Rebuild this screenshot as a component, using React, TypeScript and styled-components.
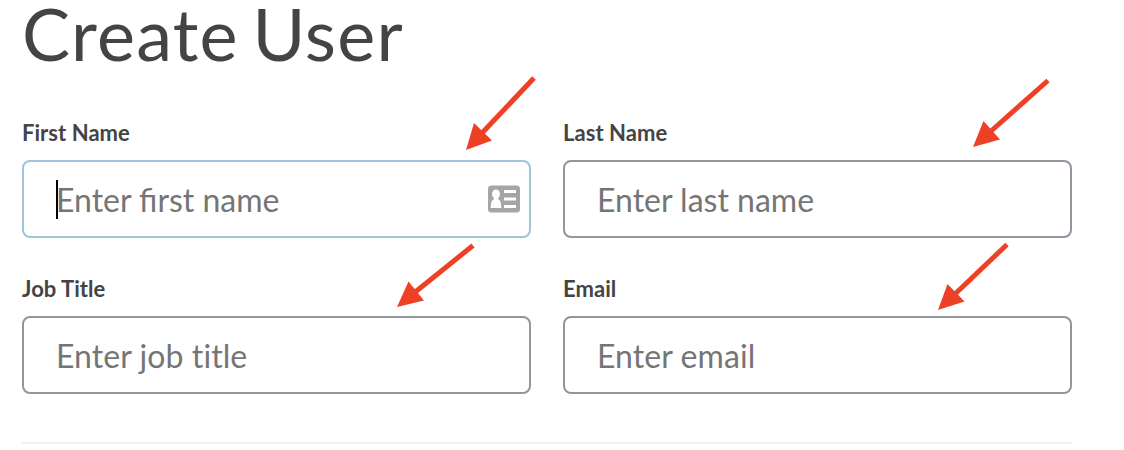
import styled, {createGlobalStyle} from 'styled-components'

const GlobalStyle = createGlobalStyle`
    * {
        box-sizing: border-box;
    }

    body {
        margin: 0;
        background: #fff;
        font-family: Lato, 'Liberation Sans', sans-serif;
        color: #444;
    }
`

const ContactIcon = () => (
    <svg width="32" height="28" viewBox="0 0 32 28">
        <rect y="0.5" width="32" height="27" rx="3.5" fill="#a5a5a5"/>
        <ellipse cx="8" cy="9" rx="4" ry="4.5" fill="#fff"/>
        <path d="M6 12h4v2c2.5 1 3.3 4 3.3 9H2.7c0-5 .8-8 3.3-9z" fill="#fff"/>
        <path d="M16 6.5h12M16 14h12M16 21.5h12" stroke="#fff" strokeWidth="3"/>
    </svg>
)

const App = () => (
    <>
        <GlobalStyle/>
        <Page>
            <Title>Create User</Title>
            <Fields>
                <Field>
                    <Label>First Name</Label>
                    <InputBox $focused>
                        <Caret/>
                        <Placeholder>Enter first name</Placeholder>
                        <ContactIcon/>
                    </InputBox>
                </Field>
                <Field>
                    <Label>Last Name</Label>
                    <InputBox><Placeholder>Enter last name</Placeholder></InputBox>
                </Field>
                <Field>
                    <Label>Job Title</Label>
                    <InputBox><Placeholder $plain>Enter job title</Placeholder></InputBox>
                </Field>
                <Field>
                    <Label>Email</Label>
                    <InputBox><Placeholder $plain>Enter email</Placeholder></InputBox>
                </Field>
            </Fields>
            <Divider/>
            <Arrows viewBox="0 0 1124 450">
                <g stroke="#ee4025" strokeWidth="5">
                    <path d="M534 78L482 133"/>
                    <path d="M1048 80.5L990 132"/>
                    <path d="M473 245.5L414 293"/>
                    <path d="M1007 244.5L954 295"/>
                </g>
                <g fill="#ee4025">
                    <path d="M466 150L474 123L492 140.5z"/>
                    <path d="M973 147L983.5 121L1000 139.5z"/>
                    <path d="M397 307L408.5 281.5L424 300.5z"/>
                    <path d="M938 310L947.5 284L964.5 301.5z"/>
                </g>
            </Arrows>
        </Page>
    </>
)

export default App

const Page = styled.main`
    position: relative;
    width: 1124px;
    height: 450px;
    padding: 0 52px 0 22px;
`

const Title = styled.h1`
    margin: 0;
    height: 122px;
    font-size: 72px;
    font-weight: 400;
    line-height: 66px;
    letter-spacing: 1.2px;
    word-spacing: -6px;
`

const Fields = styled.div`
    display: grid;
    grid-template-columns: 1fr 1fr;
    gap: 40px 32px;
`

const Field = styled.div`
    display: flex;
    flex-direction: column;
`

const Label = styled.label`
    height: 38px;
    font-size: 22px;
    font-weight: 700;
    line-height: 22px;
    letter-spacing: 0.05px;
`

const InputBox = styled.div<{$focused?: boolean}>`
    display: flex;
    align-items: center;
    height: 78px;
    padding: 0 9px 0 32px;
    border: 2px solid ${props => props.$focused ? '#9fc5dd' : '#92959d'};
    border-radius: 8px;
`

const Placeholder = styled.span<{$plain?: boolean}>`
    flex: 1;
    padding-top: 2px;
    font-size: 32px;
    line-height: 40px;
    letter-spacing: ${props => props.$plain ? '0.08px' : 'normal'};
    color: #757575;
`

const Caret = styled.span`
    width: 2px;
    height: 39px;
    margin-right: -2px;
    background: #000;
`

const Divider = styled.hr`
    height: 2px;
    margin: 48px 0 0;
    border: 0;
    background: #f0f0f0;
`

const Arrows = styled.svg`
    position: absolute;
    inset: 0;
    pointer-events: none;
`
